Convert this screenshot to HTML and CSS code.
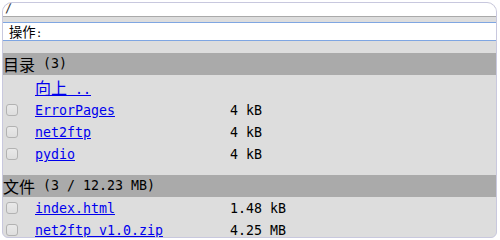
FILE: index.html
```html
<!DOCTYPE html>
<html lang="zh-CN">
<head>
<meta charset="utf-8">
<title>net2ftp</title>
<link rel="stylesheet" href="styles.css">
</head>
<body>
<div class="frame">
  <div class="path">/</div>
  <div class="spacer-a"></div>
  <div class="action"><span class="cjk-sm">操作</span>:</div>
  <div class="spacer-b"></div>

  <section class="group">
    <div class="ghead"><span class="cjk">目录</span>&nbsp;(3)</div>
    <div class="rows">
      <div class="row"><span></span><a href="#"><span class="cjk">向上</span> ..</a><span></span></div>
      <div class="row"><span class="cb"></span><a href="#">ErrorPages</a><span class="size">4 kB</span></div>
      <div class="row"><span class="cb"></span><a href="#">net2ftp</a><span class="size">4 kB</span></div>
      <div class="row"><span class="cb"></span><a href="#">pydio</a><span class="size">4 kB</span></div>
    </div>
  </section>

  <section class="group files">
    <div class="ghead"><span class="cjk">文件</span>&nbsp;(3 / 12.23 MB)</div>
    <div class="rows tight">
      <div class="row"><span class="cb"></span><a href="#">index.html</a><span class="size">1.48 kB</span></div>
      <div class="row"><span class="cb"></span><a href="#">net2ftp_v1.0.zip</a><span class="size">4.25 MB</span></div>
    </div>
  </section>
</div>
</body>
</html>
```
FILE: styles.css
```css
html, body {
  margin: 0;
  background: #ffffff;
}
body {
  padding: 2px;
  font-family: "DejaVu Sans Mono", "Noto Sans CJK SC", monospace;
  font-size: 13.29px;
  color: #000;
}
.frame {
  width: 493px;
  height: 234px;
  border: 1px solid #c8c8de;
  border-radius: 10px 10px 6px 6px;
  background: #dddddd;
  overflow: hidden;
}
.path {
  height: 13px;
  background: #ffffff;
  border-bottom: 1px solid #aaaaaa;
  font-size: 12px;
  line-height: 11px;
  padding-left: 2px;
  color: #333;
}
.spacer-a {
  height: 5px;
}
.action {
  height: 17px;
  background: #ffffff;
  border-top: 1px solid #7fa6e2;
  border-bottom: 1px solid #7fa6e2;
  font-size: 11px;
  line-height: 17px;
  padding-left: 6px;
}
.cjk-sm {
  font-family: "Noto Sans CJK SC", sans-serif;
  font-size: 13.33px;
}
.spacer-b {
  height: 12px;
}
.cjk {
  font-family: "Noto Sans CJK SC", sans-serif;
  font-size: 16px;
}
.ghead {
  height: 22px;
  background: #aaaaaa;
  display: flex;
  align-items: center;
  line-height: 16px;
  white-space: pre;
}
.rows {
  margin-top: 2px;
}
.rows.tight {
  margin-top: 0;
}
.files {
  margin-top: 10px;
}
.row {
  display: grid;
  grid-template-columns: 32px 195px 1fr;
  height: 22px;
  box-sizing: border-box;
  padding-top: 2px;
  align-items: start;
  line-height: 20px;
}
.row a {
  color: #0000ee;
  text-decoration: underline;
  white-space: pre;
}
.row a .cjk {
  line-height: 16px;
}
.cb {
  width: 10px;
  height: 10px;
  margin: 3px 0 0 3px;
  border: 1px solid #b2b2b2;
  border-radius: 3px;
  background: linear-gradient(#e9e9e9, #dedede);
}
.size {
  white-space: pre;
}
```
